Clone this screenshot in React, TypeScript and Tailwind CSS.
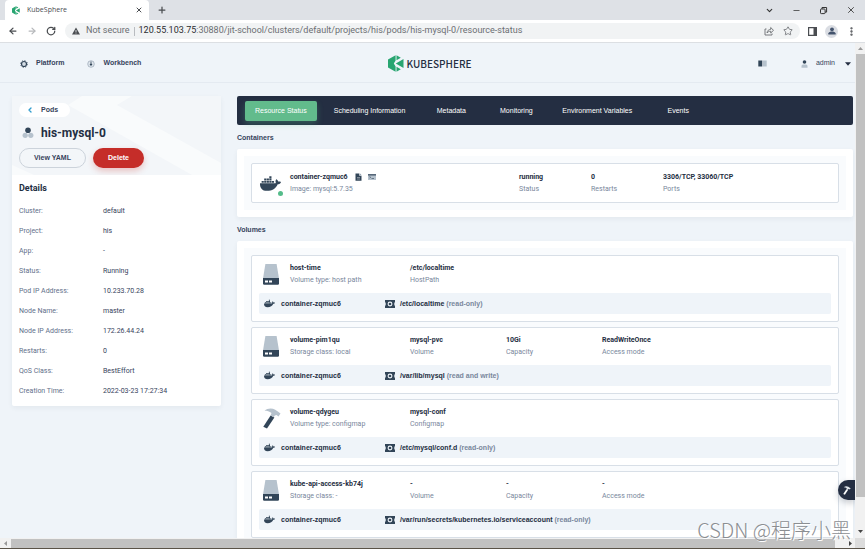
import type { ReactNode } from "react"
import { FaDocker } from "react-icons/fa"
import { ArrowLeft, ArrowRight, ChevronDown, ChevronLeft, Minus, MoreVertical, Plus, RotateCw, Star, X } from "lucide-react"

const details = [
  { label: "Cluster:", value: "default" },
  { label: "Project:", value: "his" },
  { label: "App:", value: "-" },
  { label: "Status:", value: "Running" },
  { label: "Pod IP Address:", value: "10.233.70.28" },
  { label: "Node Name:", value: "master" },
  { label: "Node IP Address:", value: "172.26.44.24" },
  { label: "Restarts:", value: "0" },
  { label: "QoS Class:", value: "BestEffort" },
  { label: "Creation Time:", value: "2022-03-23 17:27:34" },
]

const tabs = [
  "Resource Status",
  "Scheduling Information",
  "Metadata",
  "Monitoring",
  "Environment Variables",
  "Events",
]

const volumes = [
  {
    name: "host-time",
    desc: "Volume type: host path",
    icon: "disk",
    fields: [{ value: "/etc/localtime", label: "HostPath" }],
    path: "/etc/localtime",
    mode: "(read-only)",
  },
  {
    name: "volume-pim1qu",
    desc: "Storage class: local",
    icon: "disk",
    fields: [
      { value: "mysql-pvc", label: "Volume" },
      { value: "10Gi", label: "Capacity" },
      { value: "ReadWriteOnce", label: "Access mode" },
    ],
    path: "/var/lib/mysql",
    mode: "(read and write)",
  },
  {
    name: "volume-qdygeu",
    desc: "Volume type: configmap",
    icon: "hammer",
    fields: [{ value: "mysql-conf", label: "Configmap" }],
    path: "/etc/mysql/conf.d",
    mode: "(read-only)",
  },
  {
    name: "kube-api-access-kb74j",
    desc: "Storage class: -",
    icon: "disk",
    fields: [
      { value: "-", label: "Volume" },
      { value: "-", label: "Capacity" },
      { value: "-", label: "Access mode" },
    ],
    path: "/var/run/secrets/kubernetes.io/serviceaccount",
    mode: "(read-only)",
  },
]

function DiskIcon() {
  return (
    <svg className="h-[21px] w-4" viewBox="0 0 16 21">
      <path d="M2.4 0h11.2L16 14.5H0z" fill="#b6c2cd" />
      <path d="M0 14h16v5.5q0 1.2-1.2 1.2H1.2Q0 20.700 0 19.500z" fill="#324558" />
      <path d="M2 16.600h3v1.800H2zM6 16.600h3v1.800H6z" fill="#fff" />
    </svg>
  )
}

function HammerIcon({ small = false }: { small?: boolean }) {
  return (
    <svg className={small ? "h-[9px] w-2" : "h-[21px] w-[18px]"} viewBox="0 0 18 21">
      <path d="M7.600 7.500l3.800 2L4 20.600.3 18.700z" fill={small ? "#fff" : "#324558"} />
      <path
        d="M1.500 2.700C4.500.2 9 0 12.200 1.800l3 2 2.300 1.600-2 3-2-1.300-1.700.3-1.200 1.800-3-1.700.9-2.500C6.500 3.300 4 2.700 1.500 2.700z"
        fill={small ? "#dfe5ea" : "#b6c2cd"}
      />
    </svg>
  )
}

function MountIcon() {
  return (
    <svg className="h-2 w-[10px]" viewBox="0 0 10 8">
      <path d="M0 0h10v2.400H9.300v3.200H10V8H0V5.600h.7V2.400H0z" fill="#324558" />
      <circle cx="5" cy="4" r="1.900" fill="none" stroke="#eff4f9" strokeWidth="1.100" />
    </svg>
  )
}

function KubeMark({ className }: { className: string }) {
  return (
    <svg className={className} viewBox="0 0 16 17">
      <path d="M0 4.500L7.600.2v5.300L5.800 8.500l1.800 3v5.300L0 12.500z" fill="#28a571" />
      <path d="M8.500.2l4.300 2.500-4.300 2.500zM8.500 16.800l4.300-2.500-4.300-2.500zM15.500 4v9L7.800 8.500z" fill="#28a571" />
    </svg>
  )
}

function Field({ value, label, className = "" }: { value: string; label: string; className?: string }) {
  return (
    <div className={className}>
      <p className="font-bold text-[#242e42]">{value}</p>
      <p className="text-[#79879c]">{label}</p>
    </div>
  )
}

function Section({ title, children }: { title: string; children: ReactNode }) {
  return (
    <section>
      <h2 className="mt-2 mb-[6px] font-['Liberation_Sans',sans-serif] text-[7px] leading-[10px] font-bold text-[#36435c]">
        {title}
      </h2>
      <div className="rounded-xs bg-white p-[7px] shadow-[0_2px_5px_rgba(36,46,66,0.06)]">
        <div className="flex flex-col gap-[5px] bg-[#f9fbfd] p-[7px]">{children}</div>
      </div>
    </section>
  )
}

function BrowserBar() {
  return (
    <div className="shrink-0 bg-[#dee1e6] font-['Open_Sans',sans-serif] text-[#4a4d51]">
      <div className="flex h-5 items-center justify-between pl-[5px]">
        <div className="flex h-5 items-center">
          <div className="flex h-5 w-36 items-center rounded-t bg-white pr-[6px] pl-[7px] text-[7px]">
            <KubeMark className="mr-[7px] h-[9px] w-2" />
            <span className="flex-1">KubeSphere</span>
            <button aria-label="Close tab"><X className="size-2" strokeWidth={3} /></button>
          </div>
          <button aria-label="New tab" className="ml-2"><Plus className="size-[10px]" strokeWidth={3} /></button>
        </div>
        <div className="flex items-center gap-[18px] pr-[9px] text-[#333]">
          <button aria-label="Search tabs"><ChevronDown className="size-[9px]" strokeWidth={3} /></button>
          <button aria-label="Minimize"><Minus className="size-[9px]" /></button>
          <button aria-label="Restore">
            <svg className="size-[9px]" viewBox="0 0 9 9" fill="none" stroke="currentColor" strokeWidth="1">
              <rect x="1.500" y="3" width="4.600" height="4.600" rx=".8" />
              <path d="M3 3V1.500h4.600v4.600H6.100" />
            </svg>
          </button>
          <button aria-label="Close"><X className="size-[10px]" /></button>
        </div>
      </div>
      <div className="flex h-[23px] items-center border-b border-[#dcdfe3] bg-white px-2">
        <div className="flex w-[57px] items-center gap-[9px]">
          <button aria-label="Back"><ArrowLeft className="size-[10px]" strokeWidth={3} /></button>
          <button aria-label="Forward" className="text-[#b6b8bb]"><ArrowRight className="size-[10px]" strokeWidth={3} /></button>
          <button aria-label="Reload"><RotateCw className="size-[10px]" strokeWidth={3} /></button>
        </div>
        <div className="flex h-4 flex-1 items-center rounded-full bg-[#f1f3f4] px-[7px] font-[Roboto,sans-serif] text-[9px] text-[#6b6e72]">
          <svg className="mr-[6px] size-2" viewBox="0 0 8 8">
            <path d="M4 .5L8 7.500H0z" fill="#4a4d51" />
            <path d="M3.600 3h.8v2.200h-.8zM3.600 5.800h.8v.8h-.8z" fill="#f1f3f4" />
          </svg>
          <span>Not secure</span>
          <span className="mx-1 h-[9px] w-px bg-[#b9bcc0]" />
          <p className="flex-1">
            <span className="text-[#2b2d30]">120.55.103.75</span>
            :30880/jit-school/clusters/default/projects/his/pods/his-mysql-0/resource-status
          </p>
          <button aria-label="Share" className="mr-[9px]">
            <svg className="size-[10px]" viewBox="0 0 10 10" fill="none" stroke="currentColor" strokeWidth=".9">
              <path d="M2.500 3H1v6h7V7.500M3 7c.3-2.500 1.700-3.500 3.700-3.600V1.500L9.500 4.300 6.700 7V5.200C5.200 5.200 4 5.700 3 7z" />
            </svg>
          </button>
          <button aria-label="Bookmark"><Star className="size-[10px]" /></button>
        </div>
        <div className="flex items-center gap-2 pl-2">
          <button aria-label="Side panel">
            <svg className="size-[9px]" viewBox="0 0 9 9">
              <path d="M.6.6h7.800v7.800H.6z" fill="none" stroke="#4a4d51" strokeWidth="1.200" />
              <path d="M5.500.6h3v7.800h-3z" fill="#4a4d51" />
            </svg>
          </button>
          <button aria-label="Profile" className="flex size-[13px] items-center justify-center rounded-full bg-[#dadde3]">
            <svg className="size-2" viewBox="0 0 8 8" fill="#44546d">
              <circle cx="4" cy="2.300" r="1.900" />
              <path d="M.3 7.500V6.400C.8 5 2.500 4.600 4 4.600s3.200.4 3.700 1.800v1.100z" />
            </svg>
          </button>
          <button aria-label="Menu"><MoreVertical className="size-[11px]" strokeWidth={3} /></button>
        </div>
      </div>
    </div>
  )
}

function Header() {
  return (
    <header className="grid h-10 grid-cols-3 items-center border-b border-[#e4eaf1] pt-[2px] font-['Liberation_Sans',sans-serif] text-[7px] text-[#36435c]">
      <nav className="flex items-center gap-[23px] pl-5 font-bold">
        <a href="#platform" className="flex items-center gap-2">
          <svg className="size-2" viewBox="0 0 8 8">
            <circle cx="4" cy="4" r="2.500" fill="#d5dde6" stroke="#324558" strokeWidth="1.200" />
            <circle cx="4" cy="4" r="3.400" fill="none" stroke="#324558" strokeWidth=".8" strokeDasharray="1.300 1.370" />
          </svg>
          Platform
        </a>
        <a href="#workbench" className="flex items-center gap-2">
          <svg className="size-2" viewBox="0 0 8 8">
            <circle cx="4" cy="4" r="3.300" fill="#dfe6ed" stroke="#8d9bab" strokeWidth=".6" />
            <path d="M3.600 1.500h.8v2L5.400 4.500 4 5.900 2.600 4.500l1-1z" fill="#324558" />
          </svg>
          Workbench
        </a>
      </nav>
      <a href="#home" className="flex items-center justify-center gap-[3px] pl-1 text-[#242e42]">
        <KubeMark className="h-[17px] w-4" />
        <span className="font-['Noto_Sans_CJK_SC',sans-serif] text-[10px] font-medium">KUBESPHERE</span>
      </a>
      <div className="flex items-center justify-end pr-1">
        <button aria-label="Documentation" className="mr-[34px]">
          <svg className="h-[7px] w-[9px]" viewBox="0 0 9 7">
            <path d="M.3.5h4v6h-4z" fill="#324558" />
            <path d="M4.900.5h3.800v6H4.900z" fill="#b6c2cd" />
          </svg>
        </button>
        <button className="flex items-center">
          <svg className="mr-2 h-2 w-[7px]" viewBox="0 0 7 8">
            <circle cx="3.500" cy="2" r="1.800" fill="#324558" />
            <path d="M.5 7.800V6Q.5 4.500 2 4.500h3q1.500 0 1.500 1.500v1.800z" fill="#b6c2cd" />
          </svg>
          admin
          <svg className="ml-[10px] h-1 w-[6px]" viewBox="0 0 6 4">
            <path d="M0 .3h6L3 3.700z" fill="#242e42" />
          </svg>
        </button>
      </div>
    </header>
  )
}

function Sidebar() {
  return (
    <aside className="w-[209px] shrink-0 self-start rounded-xs bg-white shadow-[0_2px_5px_rgba(36,46,66,0.06)]">
      <div className="relative overflow-hidden bg-[#f3f6f9] px-[7px] py-[7px]">
        <svg className="absolute inset-0 size-full" viewBox="0 0 209 79" preserveAspectRatio="none" fill="#f9fbfc">
          <path d="M56 9L70 0h50l-15 9 104 58v12h-29zM0 69l22 10H0z" />
        </svg>
        <div className="relative">
          <a href="#pods" className="flex h-[14px] w-[51px] items-center gap-[7px] rounded-full bg-white pl-[7px] font-['Liberation_Sans',sans-serif] text-[7px] font-bold text-[#36435c]">
            <ChevronLeft className="size-2 text-[#329dce]" strokeWidth={4} />
            Pods
          </a>
          <h1 className="mt-2 flex h-4 items-center gap-[7px] pl-[3px] text-[12px] leading-4 font-bold text-[#242e42]">
            <svg className="size-3" viewBox="0 0 12 12">
              <circle cx="6" cy="3.300" r="2.800" fill="#324558" />
              <circle cx="3.200" cy="8.300" r="2.600" fill="#b6c2cd" />
              <circle cx="8.800" cy="8.300" r="2.600" fill="#b6c2cd" />
            </svg>
            his-mysql-0
          </h1>
          <div className="mt-[7px] flex gap-[7px] font-['Liberation_Sans',sans-serif] text-[7px] font-bold">
            <button className="h-5 w-[67px] rounded-full border border-[#ccd3db] bg-[#f3f6f9] text-[#36435c]">View YAML</button>
            <button className="h-5 w-[51px] rounded-full bg-[#c52d29] text-white shadow-[0_3px_6px_rgba(202,38,33,0.25)]">Delete</button>
          </div>
        </div>
      </div>
      <div className="px-[7px] pt-2 pb-[5px]">
        <h2 className="mb-2 text-[9px] leading-[10px] font-bold text-[#242e42]">Details</h2>
        <dl className="text-[7px] leading-5">
          {details.map((item) => (
            <div key={item.label} className="flex">
              <dt className="w-[84px] text-[#5f708a]">{item.label}</dt>
              <dd className="text-[#36435c]">{item.value}</dd>
            </div>
          ))}
        </dl>
      </div>
    </aside>
  )
}

function ContainerItem() {
  return (
    <div className="flex items-center rounded-xs border border-[#d8dfe7] bg-white px-2 py-[7px] text-[7px] leading-3">
      <div className="relative mr-2 w-[22px]">
        <FaDocker className="size-[21px] text-[#324558]" />
        <span className="absolute right-[-1px] bottom-[-2px] size-[5px] rounded-full bg-[#55bc8a]" />
      </div>
      <div className="w-[229px]">
        <div className="flex items-center gap-[6px] font-bold text-[#242e42]">
          container-zqmuc6
          <svg className="ml-px h-2 w-[7px]" viewBox="0 0 7 8">
            <path d="M.5.500h3.800v2.300h2.200v5H.5z" fill="#324558" />
            <path d="M4.800.3l1.900 2H4.800z" fill="#8d9bab" />
            <path d="M2 4.500h3M2 6h3" stroke="#fff" strokeWidth=".4" />
          </svg>
          <svg className="h-[6px] w-2" viewBox="0 0 8 6">
            <path d="M0 0h8v6H0z" fill="#b6c2cd" />
            <path d="M0 0h8v1.600H0z" fill="#566779" />
            <path d="M1.500 2.500l1.200.8-1.200.8M3.500 4.500h2.500" fill="none" stroke="#324558" strokeWidth=".6" />
          </svg>
        </div>
        <p className="text-[#79879c]">Image: mysql:5.7.35</p>
      </div>
      <Field className="w-[72px]" value="running" label="Status" />
      <Field className="w-[72px]" value="0" label="Restarts" />
      <Field value="3306/TCP, 33060/TCP" label="Ports" />
    </div>
  )
}

function VolumeItem({ volume }: { volume: (typeof volumes)[number] }) {
  return (
    <div className="rounded-xs border border-[#d8dfe7] bg-white px-[7px] pt-[6px] pb-[7px] text-[7px] leading-3">
      <div className="mb-[7px] flex items-center pl-1">
        <div className="w-[27px]">{volume.icon === "disk" ? <DiskIcon /> : <HammerIcon />}</div>
        <Field className="w-[120px]" value={volume.name} label={volume.desc} />
        {volume.fields.map((field) => (
          <Field key={field.label} className="w-24" value={field.value} label={field.label} />
        ))}
      </div>
      <div className="flex h-[21px] items-center rounded-xs bg-[#eff4f9] pl-[5px] font-['Liberation_Sans',sans-serif] font-bold text-[#242e42]">
        <div className="flex w-[121px] items-center gap-[6px]">
          <FaDocker className="size-[11px] text-[#324558]" />
          container-zqmuc6
        </div>
        <MountIcon />
        <p className="pl-[5px]">
          {volume.path} <span className="text-[#79879c]">{volume.mode}</span>
        </p>
      </div>
    </div>
  )
}

export default function App() {
  return (
    <div className="relative flex h-screen flex-col overflow-hidden border-b border-[#5a5348] bg-[#eff4f9] font-[Roboto,sans-serif]">
      <BrowserBar />
      <div className="flex min-h-0 flex-1">
        <div className="relative min-w-0 flex-1 overflow-hidden">
          <Header />
          <div className="flex gap-4 pt-[13px] pr-[2px] pl-3">
            <Sidebar />
            <main className="min-w-0 flex-1">
              <nav className="flex h-[29px] items-center gap-[7px] rounded-xs bg-[#242e42] px-2 font-['Liberation_Sans',sans-serif] text-[7px] text-white">
                {tabs.map((tab, index) => (
                  <button
                    key={tab}
                    className={`h-5 min-w-[58px] rounded-xs px-[10px] pt-px ${
                      index === 0 ? "bg-[#62bb8c] shadow-[0_3px_6px_rgba(85,188,138,0.3)]" : ""
                    }`}
                  >
                    {tab}
                  </button>
                ))}
              </nav>
              <Section title="Containers">
                <ContainerItem />
              </Section>
              <Section title="Volumes">
                {volumes.map((volume) => (
                  <VolumeItem key={volume.name} volume={volume} />
                ))}
              </Section>
            </main>
          </div>
          <button
            aria-label="Toolbox"
            className="absolute right-0 bottom-[38px] flex h-5 w-[17px] items-center justify-center rounded-l-full bg-[#242e42] shadow-[0_3px_6px_rgba(36,46,66,0.25)]"
          >
            <HammerIcon small />
          </button>
        </div>
        {/* Vertical scrollbar */}
        <div className="flex w-[10px] flex-col items-center bg-[#f1f1f1]">
          <svg className="my-1 h-[3px] w-[5px]" viewBox="0 0 5 3"><path d="M0 3h5L2.500 0z" fill="#999" /></svg>
          <div className="w-[9px] flex-1 bg-[#c1c1c1]" />
          <svg className="mt-[33px] mb-[5px] h-[3px] w-[5px]" viewBox="0 0 5 3"><path d="M0 0h5L2.500 3z" fill="#444" /></svg>
        </div>
      </div>
      {/* Horizontal scrollbar */}
      <div className="flex h-[10px] shrink-0 items-center bg-[#f1f1f1]">
        <svg className="mx-1 h-[5px] w-[3px]" viewBox="0 0 3 5"><path d="M3 0v5L0 2.500z" fill="#999" /></svg>
        <div className="h-[9px] flex-1 bg-[#c1c1c1]" />
        <svg className="mr-[3px] ml-[14px] h-[5px] w-[3px]" viewBox="0 0 3 5"><path d="M0 0v5l3-2.500z" fill="#444" /></svg>
        <div className="h-full w-[10px] bg-[#dcdcdc]" />
      </div>
      <p className="absolute right-[14px] bottom-1 font-['Noto_Sans_CJK_SC',sans-serif] text-[20px] leading-7 font-light text-[#8b8e92] [text-shadow:1px_1px_0_#fff]">
        CSDN @程序小黑
      </p>
    </div>
  )
}
